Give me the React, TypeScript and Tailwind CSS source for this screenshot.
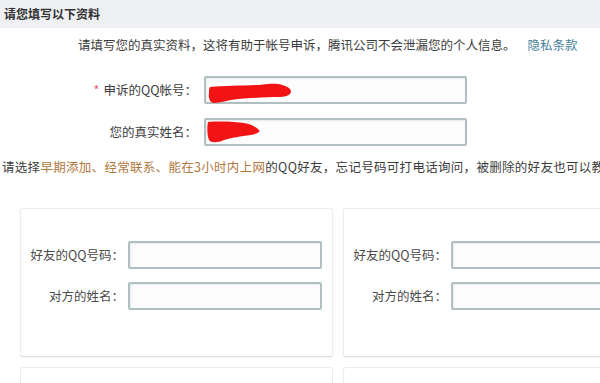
import React from "react";

const font = { fontFamily: '"Noto Sans CJK SC", "Noto Sans", sans-serif' };

function Scribble1() {
  return (
    <svg className="absolute left-[2px] top-[5px]" width="86" height="22" viewBox="0 0 86 22">
      <path
        d="M2 4 C20 2 45 3 60 1 C70 0 78 2 82 6 C85 10 81 14 72 14 C60 14 45 15 30 16 C20 17 12 20 6 20 C2 20 0 15 1 10 C1 7 1 5 2 4 Z"
        fill="#f21414"
      />
    </svg>
  );
}

function Scribble2() {
  return (
    <svg className="absolute left-[0px] top-[0px]" width="56" height="25" viewBox="0 0 56 25">
      <path
        d="M2 2 C15 1 30 2 38 3 C45 4 50 7 53 10 C55 12 51 14 45 15 C35 16 25 18 18 20 C12 23 5 23 3 20 C1 15 1 7 2 2 Z"
        fill="#f21414"
      />
    </svg>
  );
}

function Input({ className = "", children }: { className?: string; children?: React.ReactNode }) {
  return (
    <div
      className={
        "relative h-[28px] border-2 border-[#b0bfc2] rounded-[2px] bg-[#fdfdfd] shadow-[inset_1px_1px_2px_rgba(0,0,0,0.08)] " +
        className
      }
    >
      {children}
    </div>
  );
}

function FriendCard() {
  return (
    <div className="w-[313px] h-[149px] shrink-0 border border-[#ececec] border-b-[#dedede] rounded-[3px] bg-white shadow-[0_1px_2px_rgba(0,0,0,0.05)] pt-[32px]">
      <div className="flex items-center">
        <div className="w-[103px] text-right text-[12.5px] text-[#4a4a4a]">好友的QQ号码：</div>
        <Input className="ml-[4px] w-[194px]" />
      </div>
      <div className="flex items-center mt-[13px]">
        <div className="w-[103px] text-right text-[12.5px] text-[#4a4a4a]">对方的姓名：</div>
        <Input className="ml-[4px] w-[194px]" />
      </div>
    </div>
  );
}

export default function App() {
  return (
    <div className="w-[600px] h-[383px] overflow-hidden bg-white text-[#3c3c3c]" style={font}>
      <div className="h-[28px] bg-[#eef0f3] pl-[4px] flex items-center">
        <span className="text-[12px] font-bold text-[#333]">请您填写以下资料</span>
      </div>

      <div className="mt-[7px] pl-[78px] h-[20px] flex items-center text-[12.5px] whitespace-nowrap">
        <span>请填写您的真实资料，这将有助于帐号申诉，腾讯公司不会泄漏您的个人信息。</span>
        <span className="ml-[12px] text-[#4a7f9c]">隐私条款</span>
      </div>

      <div className="mt-[21px] flex items-center">
        <div className="w-[197px] text-right text-[12.5px] whitespace-nowrap">
          <span className="text-[#e05a6a] mr-[4px]">*</span>申诉的QQ帐号：
        </div>
        <Input className="ml-[7px] w-[263px]">
          <Scribble1 />
        </Input>
      </div>
      <div className="mt-[14px] flex items-center">
        <div className="w-[197px] text-right text-[12.5px] whitespace-nowrap">您的真实姓名：</div>
        <Input className="ml-[7px] w-[263px]">
          <Scribble2 />
        </Input>
      </div>

      <div className="mt-[11px] pl-[2px] h-[20px] flex items-center text-[12.5px] tracking-[0.3px] whitespace-nowrap overflow-hidden">
        <span>请选择</span>
        <span className="text-[#b0783e]">早期添加、经常联系、能在3小时内上网</span>
        <span>的QQ好友，忘记号码可打电话询问，被删除的好友也可以教</span>
      </div>

      <div className="mt-[31px] pl-[20px] flex gap-[10px]">
        <FriendCard />
        <FriendCard />
      </div>
      <div className="mt-[10px] pl-[20px] flex gap-[10px]">
        <div className="w-[313px] h-[40px] shrink-0 border border-[#ececec] rounded-[3px] bg-white" />
        <div className="w-[313px] h-[40px] shrink-0 border border-[#ececec] rounded-[3px] bg-white" />
      </div>
    </div>
  );
}
